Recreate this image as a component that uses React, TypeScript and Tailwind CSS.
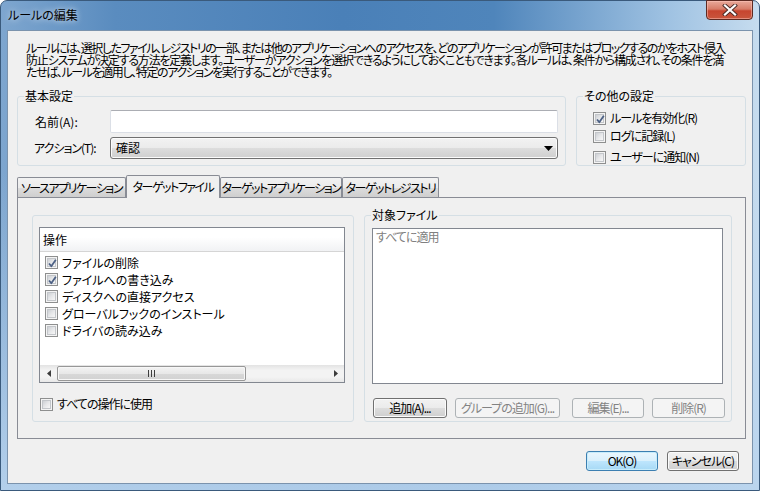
import React from "react";

const F = "font-['Noto_Sans_CJK_JP','Noto_Sans',sans-serif] [font-feature-settings:'palt']";

function Check({ checked = false }: { checked?: boolean }) {
  return (
    <span className="relative w-[13px] h-[13px] shrink-0 border border-[#8e8f8f] bg-[#f4f4f4] flex items-center justify-center">
      <span className="w-[9px] h-[9px] border border-[#c3c6ca] bg-[linear-gradient(135deg,#cdd0d4_0%,#e6e7e9_50%,#f7f7f7_100%)]" />
      {checked && (
        <svg className="absolute left-[1px] top-[1px]" width="11" height="11" viewBox="0 0 11 11">
          <path d="M2 5.5 L4.3 8.2 L8.8 1.8" fill="none" stroke="#4d6185" strokeWidth="1.8" strokeLinejoin="round" />
        </svg>
      )}
    </span>
  );
}

function Btn({ children, w, disabled = false, def = false }: { children: React.ReactNode; w: string; disabled?: boolean; def?: boolean }) {
  let cls =
    "h-[20px] flex items-center justify-center rounded-[3px] border text-[12px] leading-none whitespace-nowrap tracking-[-1px] ";
  if (disabled) cls += "border-[#adb2b5] bg-[#f4f4f4] text-[#838383]";
  else if (def)
    cls +=
      "border-[#3c7fb1] bg-[linear-gradient(180deg,#eaf6fd_0%,#d9f0fc_50%,#bee6fd_50%,#a7d9f5_100%)] shadow-[inset_0_0_0_1px_#c7ecfb] text-black";
  else
    cls +=
      "border-[#707070] bg-[linear-gradient(180deg,#f2f2f2_0%,#ebebeb_50%,#dddddd_50%,#cfcfcf_100%)] shadow-[inset_0_0_0_1px_#fbfbfb] text-black";
  return <div className={`${cls} ${w}`}>{children}</div>;
}

function Group({ legend, className, children }: { legend?: string; className: string; children?: React.ReactNode }) {
  return (
    <div className={`relative border border-[#d5dfe5] rounded-[3px] ${className}`}>
      {legend && (
        <span className="absolute left-[6px] top-[-8px] bg-[#f0f0f0] px-[1px] text-[12px] leading-[14px] text-black whitespace-nowrap">
          {legend}
        </span>
      )}
      {children}
    </div>
  );
}

export default function App() {
  const tabBase =
    "h-[20px] flex items-center justify-center border border-b-0 border-[#898c95] rounded-t-[2px] text-[12px] text-black whitespace-nowrap tracking-[-1.5px]";
  const tabInactive = `${tabBase} bg-[linear-gradient(180deg,#f2f2f2_0%,#ebebeb_50%,#dddddd_50%,#cfcfcf_100%)]`;
  return (
    <div className={`${F} w-[760px] h-[491px] overflow-hidden bg-white`}>
      <div className="w-[760px] h-[491px] rounded-t-[7px] flex flex-col border border-[#3a5a7c] bg-[linear-gradient(180deg,rgba(255,255,255,0)_0%,rgba(255,255,255,0)_35%,rgba(185,212,238,0.9)_100%),linear-gradient(90deg,#7ea6cf_0%,#5a8cbf_15%,#4a80b8_45%,#4f85bb_65%,#9fc2e2_88%,#c6dcef_100%)]">
        {/* title bar */}
        <div className="h-[29px] flex items-start shrink-0">
          <span className="ml-[7px] mt-[6px] text-[12px] leading-[16px] text-black [text-shadow:0_0_6px_rgba(255,255,255,0.9)]">
            ルールの編集
          </span>
          <div className="ml-auto mr-[6px] mt-[-1px] w-[47px] h-[20px] rounded-b-[4px] border border-[#5d2a22] bg-[linear-gradient(180deg,#e9a99a_0%,#d77c68_45%,#c7452f_55%,#c9563d_100%)] shadow-[inset_0_0_0_1px_rgba(255,200,190,0.5)] flex items-center justify-center">
            <svg width="16" height="12" viewBox="0 0 16 12">
              <path d="M3 1.5 L13 10.5 M13 1.5 L3 10.5" stroke="#4a2a26" strokeWidth="4" strokeLinecap="square" />
              <path d="M3 1.5 L13 10.5 M13 1.5 L3 10.5" stroke="#ffffff" strokeWidth="2.2" strokeLinecap="square" />
            </svg>
          </div>
        </div>
        {/* client */}
        <div className="ml-[6px] mr-[6px] mb-[6px] flex-1 border border-[#7b93ad] bg-[#f0f0f0] flex flex-col text-black">
          <div className="ml-[18px] mt-[11px] text-[12px] leading-[12px] whitespace-nowrap">
            <div className="tracking-[-1.5px]">ルールには、選択したファイル、レジストリの一部、または他のアプリケーションへのアクセスを、どのアプリケーションが許可またはブロックするのかをホスト侵入</div>
            <div className="tracking-[-1.2px]">防止システムが決定する方法を定義します。ユーザーがアクションを選択できるようにしておくこともできます。各ルールは、条件から構成され、その条件を満</div>
            <div className="tracking-[-1.4px]">たせば、ルールを適用し、特定のアクションを実行することができます。</div>
          </div>

          {/* groups */}
          <div className="flex ml-[9px] mt-[18px] gap-[10px]">
            <Group legend="基本設定" className="w-[549px] h-[70px]">
              <div className="flex flex-col pt-[13px] gap-[4px]">
                <div className="flex items-center h-[23px]">
                  <span className="w-[92px] pl-[17px] text-[12px] whitespace-nowrap">名前(A):</span>
                  <div className="w-[448px] h-[23px] bg-white border border-[#dbdfe6] border-t-[#abadb3] rounded-[2px]" />
                </div>
                <div className="flex items-center h-[22px]">
                  <span className="w-[92px] pl-[16px] text-[12px] whitespace-nowrap tracking-[-1px]">アクション(T):</span>
                  <div className="w-[448px] h-[22px] rounded-[3px] border border-[#707070] bg-[linear-gradient(180deg,#f2f2f2_0%,#ebebeb_50%,#dddddd_50%,#cfcfcf_100%)] shadow-[inset_0_0_0_1px_#fbfbfb] flex items-center pl-[5px] pr-[4px] text-[12px]">
                    <span>確認</span>
                    <svg className="ml-auto" width="9" height="5" viewBox="0 0 9 5">
                      <path d="M0 0 H9 L4.5 5 Z" fill="#000" />
                    </svg>
                  </div>
                </div>
              </div>
            </Group>
            <Group legend="その他の設定" className="w-[170px] h-[70px]">
              <div className="flex flex-col pl-[16px] pt-[14px] text-[12px] whitespace-nowrap tracking-[-1px]">
                <div className="flex items-center gap-[4px] h-[14px]">
                  <Check checked />
                  <span>ルールを有効化(R)</span>
                </div>
                <div className="flex items-center gap-[4px] h-[14px] mt-[4px]">
                  <Check />
                  <span>ログに記録(L)</span>
                </div>
                <div className="flex items-center gap-[4px] h-[14px] mt-[7px]">
                  <Check />
                  <span>ユーザーに通知(N)</span>
                </div>
              </div>
            </Group>
          </div>

          {/* tabs */}
          <div className="ml-[9px] mt-[8px] flex items-end h-[23px] relative z-10">
            <div className={`${tabInactive} w-[109px]`}>ソースアプリケーション</div>
            <div className="h-[23px] w-[94px] -mb-px flex items-start pt-[2px] justify-center border border-b-0 border-[#898c95] rounded-t-[2px] bg-[#f0f0f0] text-[12px] whitespace-nowrap tracking-[-1.5px]">
              ターゲットファイル
            </div>
            <div className={`${tabInactive} w-[122px]`}>ターゲットアプリケーション</div>
            <div className={`${tabInactive} w-[97px]`}>ターゲットレジストリ</div>
          </div>
          <div className="ml-[9px] w-[729px] h-[242px] border border-[#898c95] bg-[#f0f0f0] flex pl-[14px] pt-[17px] gap-[10px]">
            {/* left group */}
            <Group className="w-[322px] h-[207px]">
              <div className="ml-[6px] mt-[11px] w-[306px] h-[156px] border border-[#828790] bg-white flex flex-col">
                <div className="h-[24px] shrink-0 border-b border-[#d5d5d5] bg-[linear-gradient(180deg,#ffffff_0%,#ffffff_40%,#f1f2f4_100%)] flex items-center pl-[3px] text-[12px]">
                  操作
                </div>
                <div className="flex flex-col pt-[2px] pl-[5px] text-[12px] whitespace-nowrap">
                  {[
                    ["ファイルの削除", true],
                    ["ファイルへの書き込み", true],
                    ["ディスクへの直接アクセス", false],
                    ["グローバルフックのインストール", false],
                    ["ドライバの読み込み", false],
                  ].map(([t, c]) => (
                    <div key={t as string} className="h-[17px] flex items-center gap-[4px]">
                      <Check checked={c as boolean} />
                      <span>{t as string}</span>
                    </div>
                  ))}
                </div>
                {/* scrollbar */}
                <div className="mt-auto h-[17px] bg-[linear-gradient(180deg,#e3e3e3_0%,#f3f3f3_30%,#f3f3f3_70%,#e8e8e8_100%)] flex items-center">
                  <div className="w-[17px] h-[17px] flex items-center justify-center">
                    <svg width="4" height="7" viewBox="0 0 4 7"><path d="M4 0 V7 L0 3.5 Z" fill="#3c3c3c" /></svg>
                  </div>
                  <div className="w-[189px] h-[15px] rounded-[2px] border border-[#979797] bg-[linear-gradient(180deg,#f3f3f3_0%,#e8e8e8_50%,#d8d8d8_50%,#d2d2d2_100%)] shadow-[inset_0_0_0_1px_#f7f7f7] flex items-center justify-center">
                    <svg width="7" height="7" viewBox="0 0 7 7">
                      <path d="M0.5 0 V7 M3.5 0 V7 M6.5 0 V7" stroke="#3d3d3d" strokeWidth="1" />
                    </svg>
                  </div>
                  <div className="flex-1" />
                  <div className="w-[17px] h-[17px] flex items-center justify-center">
                    <svg width="4" height="7" viewBox="0 0 4 7"><path d="M0 0 V7 L4 3.5 Z" fill="#3c3c3c" /></svg>
                  </div>
                </div>
              </div>
              <div className="ml-[7px] mt-[12px] flex items-center gap-[4px] text-[12px] whitespace-nowrap tracking-[-1px]">
                <Check />
                <span>すべての操作に使用</span>
              </div>
            </Group>
            {/* right group */}
            <Group legend="対象ファイル" className="w-[368px] h-[207px]">
              <div className="ml-[7px] mt-[12px] w-[351px] h-[156px] border border-[#828790] bg-white pl-[3px] pt-[1px] text-[12px] leading-[14px] text-[#808080] tracking-[-1px]">
                すべてに適用
              </div>
              <div className="flex ml-[8px] mt-[14px]">
                <Btn w="w-[74px]">追加(A)...</Btn>
                <div className="w-[8px]" />
                <Btn w="w-[105px]" disabled>グループの追加(G)...</Btn>
                <div className="w-[12px]" />
                <Btn w="w-[72px]" disabled>編集(E)...</Btn>
                <div className="w-[8px]" />
                <Btn w="w-[73px]" disabled>削除(R)</Btn>
              </div>
            </Group>
          </div>

          {/* bottom buttons */}
          <div className="flex justify-end mt-[12px] mr-[13px] gap-[9px]">
            <Btn w="w-[72px]" def>OK(O)</Btn>
            <Btn w="w-[72px]">キャンセル(C)</Btn>
          </div>
        </div>
      </div>
    </div>
  );
}
